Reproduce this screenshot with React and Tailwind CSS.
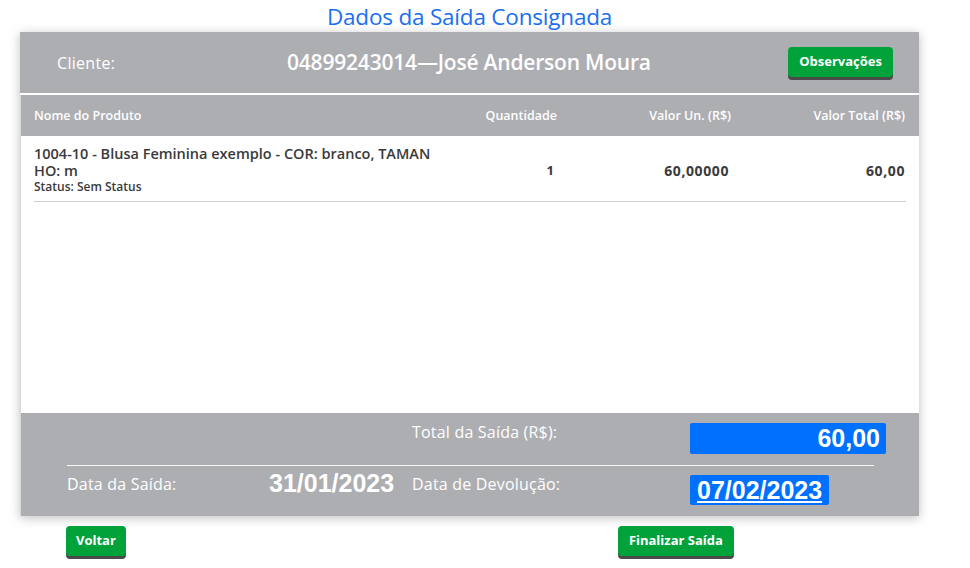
export default function App() {
  const os = { fontFamily: '"Open Sans", Lato, sans-serif' };
  return (
    <div className="w-[970px] h-[568px] bg-white overflow-hidden relative" style={os}>
      <div className="ml-[20px] w-[899px] h-[32px] flex items-center justify-center">
        <h1 className="text-[22.5px] leading-none text-[#1a6ff0] font-medium tracking-[-0.2px] mt-[2px]">
          Dados da Saída Consignada
        </h1>
      </div>
      <div className="ml-[20px] w-[899px] shadow-[0_2px_10px_rgba(0,0,0,0.25)] bg-white">
        <div className="h-[61px] bg-[#adaeb2] flex items-center text-white">
          <div className="w-[267px] pl-[37px] text-[16px] font-medium tracking-[0.3px]">Cliente:</div>
          <div className="flex-1 text-[21px] font-semibold tracking-[-0.2px]">
            04899243014—José Anderson Moura
          </div>
          <button className="mr-[26px] mb-[2px] h-[30px] px-[11px] rounded-[4px] bg-[#02a23a] text-white text-[13px] font-bold shadow-[0_3px_0_#4a4a4a]">
            Observações
          </button>
        </div>
        <div className="h-[2px] bg-white"></div>
        <div className="border-l border-[#d8d8d8]">
          <div className="h-[41px] pt-[2px] bg-[#adaeb2] grid grid-cols-[13px_minmax(0,1fr)_125px_174px_174px_14px] items-center text-white text-[12.5px] font-semibold">
            <div></div>
            <div>Nome do Produto</div>
            <div className="text-right">Quantidade</div>
            <div className="text-right">Valor Un. (R$)</div>
            <div className="text-right">Valor Total (R$)</div>
            <div></div>
          </div>
          <div className="h-[277px] pl-[13px] pr-[13px]">
            <div className="grid grid-cols-[minmax(0,1fr)_125px_174px_174px] items-center border-b border-[#cfcfcf] h-[66px] text-[#3a3a3a]">
              <div className="pt-[2px]">
                <div className="text-[14.5px] leading-[17px] font-semibold whitespace-nowrap">
                  <div>1004-10 - Blusa Feminina exemplo - COR: branco, TAMAN</div>
                  <div>HO: m</div>
                </div>
                <div className="text-[12px] leading-[15px] font-semibold">Status: Sem Status</div>
              </div>
              <div className="text-right pr-[4px] pt-[4px] text-[13px] font-bold">1</div>
              <div className="text-right pr-[3px] pt-[4px] text-[14px] font-bold tracking-[0.6px]">60,00000</div>
              <div className="text-right pr-[1px] pt-[4px] text-[14px] font-bold tracking-[0.6px]">60,00</div>
            </div>
          </div>
          <div className="h-[103px] bg-[#adaeb2] text-white pl-[46px] pt-[10px]">
            <div className="grid grid-cols-[202px_143px_278px_196px] h-[42px]">
              <div></div>
              <div></div>
              <div className="text-[16px] font-medium tracking-[0.2px] -mt-[3px]">Total da Saída (R$):</div>
              <div className="h-[31px] bg-[#0071fe] rounded-[2px] text-right pr-[6px] text-[25px] font-bold leading-[31px] font-['Liberation_Sans',Arial,sans-serif]">
                60,00
              </div>
            </div>
            <div className="w-[807px] h-px bg-white/90"></div>
            <div className="grid grid-cols-[202px_143px_278px_196px] pt-[10px]">
              <div className="text-[16px] font-medium tracking-[0.2px] -mt-[4px]">Data da Saída:</div>
              <div className="text-[25px] font-bold leading-[30px] font-['Liberation_Sans',Arial,sans-serif] -mt-[8px]">31/01/2023</div>
              <div className="text-[16px] font-medium tracking-[0.2px] -mt-[4px]">Data de Devolução:</div>
              <div>
                <span className="inline-block h-[30px] px-[7px] bg-[#0071fe] rounded-[2px] text-[25px] font-bold leading-[30px] underline font-['Liberation_Sans',Arial,sans-serif] -mt-[1px]">
                  07/02/2023
                </span>
              </div>
            </div>
          </div>
        </div>
      </div>
      <div className="flex pt-[10px]">
        <button className="ml-[66px] h-[30px] px-[10px] rounded-[4px] bg-[#02a23a] text-white text-[13px] font-bold shadow-[0_3px_0_#4a4a4a]">
          Voltar
        </button>
        <button className="ml-[492px] h-[30px] px-[11px] rounded-[4px] bg-[#02a23a] text-white text-[13px] font-bold shadow-[0_3px_0_#4a4a4a]">
          Finalizar Saída
        </button>
      </div>
    </div>
  );
}
